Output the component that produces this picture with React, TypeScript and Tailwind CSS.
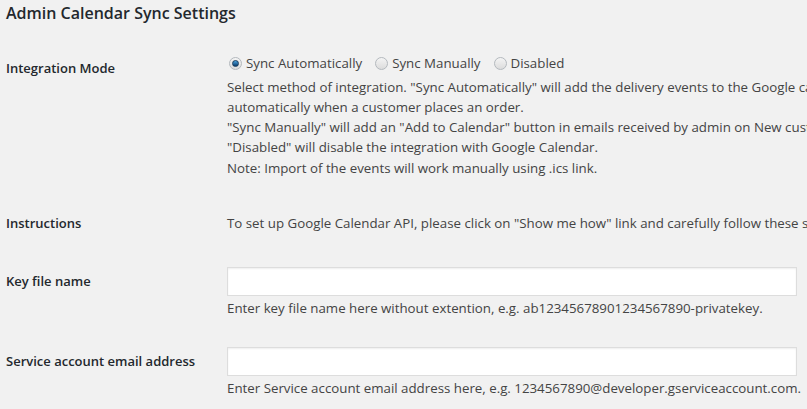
import React from "react";

const font = "font-['Open_Sans','Noto_Sans',sans-serif]";

const Radio = ({ label, checked }: { label: string; checked?: boolean }) => (
  <label className="flex items-center gap-[4px] mr-[13px]">
    <span className="w-[13px] h-[13px] rounded-full border border-[#b4b9be] bg-gradient-to-b from-[#f4f4f4] to-[#dcdcdc] flex items-center justify-center">
      {checked && (
        <span className="w-[7px] h-[7px] rounded-full bg-gradient-to-b from-[#4aa3df] to-[#0a3d6e] border border-[#173b5c]" />
      )}
    </span>
    <span>{label}</span>
  </label>
);

const Row = ({
  label,
  labelClass,
  children,
}: {
  label: string;
  labelClass?: string;
  children: React.ReactNode;
}) => (
  <div className="flex">
    <div className={`w-[227px] shrink-0 pl-[6px] text-[13px] font-semibold text-[#23282d] ${labelClass ?? ""}`}>
      {label}
    </div>
    <div className="flex-1 min-w-0">{children}</div>
  </div>
);

export default function App() {
  return (
    <div className={`w-[807px] h-[409px] overflow-hidden bg-[#f1f1f1] text-[#444] text-[13.3px] leading-[20px] ${font}`}>
      <div className="w-[1100px]">
        <h2 className="pl-[6px] pt-[1px] text-[16px] leading-[24px] font-semibold text-[#23282d]">
          Admin Calendar Sync Settings
        </h2>

        <div className="mt-[28px]">
          <Row label="Integration Mode" labelClass="pt-[5px]">
            <div className="flex items-center whitespace-nowrap pl-[2px]">
              <Radio label="Sync Automatically" checked />
              <Radio label="Sync Manually" />
              <Radio label="Disabled" />
            </div>
            <div className="mt-[4px] whitespace-nowrap">
              <p>
                Select method of integration. "Sync Automatically" will add the delivery events to the Google calendar
              </p>
              <p>automatically when a customer places an order.</p>
              <p>
                "Sync Manually" will add an "Add to Calendar" button in emails received by admin on New customer order.
              </p>
              <p>"Disabled" will disable the integration with Google Calendar.</p>
              <p className="mt-[1px]">Note: Import of the events will work manually using .ics link.</p>
            </div>
          </Row>
        </div>

        <div className="mt-[35px]">
          <Row label="Instructions">
            <p className="whitespace-nowrap">
              To set up Google Calendar API, please click on "Show me how" link and carefully follow these steps:
            </p>
          </Row>
        </div>

        <div className="mt-[34px]">
          <Row label="Key file name" labelClass="pt-[4px]">
            <input className="block w-[570px] h-[29px] bg-white border border-[#ddd] shadow-[inset_0_1px_2px_rgba(0,0,0,0.07)] outline-none" />
            <p className="mt-[2px] whitespace-nowrap">
              Enter key file name here without extention, e.g. ab12345678901234567890-privatekey.
            </p>
          </Row>
        </div>

        <div className="mt-[29px]">
          <Row label="Service account email address" labelClass="pt-[4px]">
            <input className="block w-[570px] h-[29px] bg-white border border-[#ddd] shadow-[inset_0_1px_2px_rgba(0,0,0,0.07)] outline-none" />
            <p className="mt-[2px] whitespace-nowrap">
              Enter Service account email address here, e.g. 1234567890@developer.gserviceaccount.com.
            </p>
          </Row>
        </div>
      </div>
    </div>
  );
}
